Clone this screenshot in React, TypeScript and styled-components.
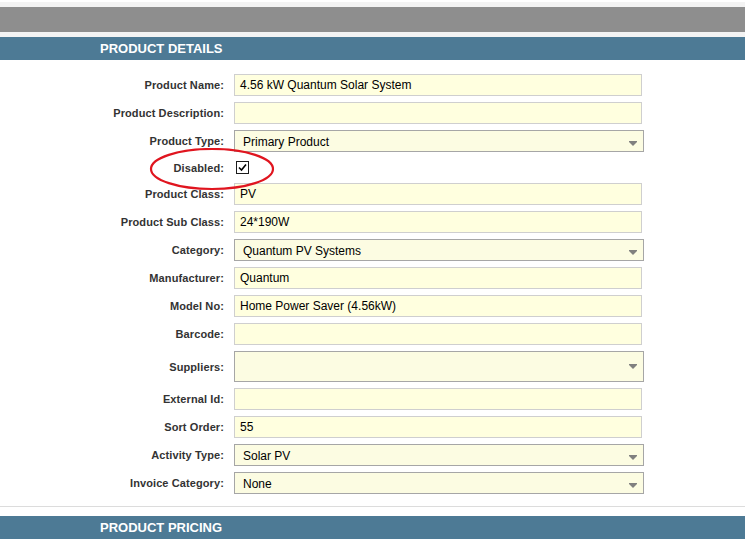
import { Fragment } from "react"
import styled, { createGlobalStyle } from "styled-components"

const GlobalStyle = createGlobalStyle`
    body {
        margin: 0;
        background: #ffffff;
        font-family: "Liberation Sans", Arial, sans-serif;
    }
`

const Page = styled.div`
    width: 745px;
    height: 544px;
    overflow: hidden;
    padding-top: 2px;
    box-sizing: border-box;
`

const TopBand = styled.div`
    background: #f3f3f3;
    padding: 5px 0;
`

const GrayBar = styled.div`
    height: 25px;
    background: #8e8e8e;
`

const SectionHeader = styled.div`
    height: 23px;
    background: #4d7a95;
    color: #ffffff;
    font-weight: bold;
    font-size: 13px;
    line-height: 23px;
    padding-left: 100px;
`

const Form = styled.div`
    position: relative;
    display: grid;
    grid-template-columns: 224px 410px;
    column-gap: 10px;
    row-gap: 6px;
    align-items: center;
    padding: 14px 0 12px;
    border-bottom: 1px solid #dcdcdc;
    margin-bottom: 9px;
`

const Label = styled.div`
    text-align: right;
    font-size: 11px;
    font-weight: bold;
    color: #333333;
    letter-spacing: 0.1px;
`

const TextInput = styled.div`
    width: 408px;
    height: 22px;
    box-sizing: border-box;
    border: 1px solid #cfcfcf;
    background: #ffffdf;
    font-size: 12px;
    line-height: 20px;
    padding-left: 5px;
    color: #000000;
`

const Select = styled.div<{ $tall?: boolean }>`
    position: relative;
    width: 410px;
    height: ${(p) => (p.$tall ? 31 : 22)}px;
    box-sizing: border-box;
    border: 1px solid #a6a6a6;
    background: #fcfce2;
    font-size: 12px;
    line-height: 22px;
    padding-left: 8px;
    color: #000000;
`

const Arrow = styled.svg<{ $top: number }>`
    position: absolute;
    right: 6px;
    top: ${(p) => p.$top}px;
`

const CheckRow = styled.div`
    height: 19px;
    display: flex;
    align-items: center;
    padding-left: 2px;
`

const Checkbox = styled.div`
    width: 13px;
    height: 13px;
    box-sizing: border-box;
    border: 1px solid #1c1c1c;
    background: #ffffff;
    display: flex;
    align-items: center;
    justify-content: center;
`

const Annotation = styled.svg`
    position: absolute;
    left: 149px;
    top: 88px;
`

type Field = {
    label: string
    kind: "text" | "select" | "check"
    value?: string
    tall?: boolean
}

const fields: Field[] = [
    { label: "Product Name:", kind: "text", value: "4.56 kW Quantum Solar System" },
    { label: "Product Description:", kind: "text" },
    { label: "Product Type:", kind: "select", value: "Primary Product" },
    { label: "Disabled:", kind: "check" },
    { label: "Product Class:", kind: "text", value: "PV" },
    { label: "Product Sub Class:", kind: "text", value: "24*190W" },
    { label: "Category:", kind: "select", value: "Quantum PV Systems" },
    { label: "Manufacturer:", kind: "text", value: "Quantum" },
    { label: "Model No:", kind: "text", value: "Home Power Saver (4.56kW)" },
    { label: "Barcode:", kind: "text" },
    { label: "Suppliers:", kind: "select", tall: true },
    { label: "External Id:", kind: "text" },
    { label: "Sort Order:", kind: "text", value: "55" },
    { label: "Activity Type:", kind: "select", value: "Solar PV" },
    { label: "Invoice Category:", kind: "select", value: "None" },
]

function renderField(f: Field) {
    if (f.kind === "check") {
        return (
            <CheckRow>
                <Checkbox>
                    <svg width="9" height="9" viewBox="0 0 9 9">
                        <path d="M1 4.5 L3.5 7 L8 1.5" stroke="#000" strokeWidth="1.6" fill="none" />
                    </svg>
                </Checkbox>
            </CheckRow>
        )
    }
    if (f.kind === "select") {
        return (
            <Select $tall={f.tall}>
                {f.value}
                <Arrow $top={f.tall ? 12 : 10} width="8" height="5" viewBox="0 0 8 5">
                    <path d="M0 0 H8 V1 L4 5 L0 1 Z" fill="#808080" />
                </Arrow>
            </Select>
        )
    }
    return <TextInput>{f.value}</TextInput>
}

export default function App() {
    return (
        <Page>
            <GlobalStyle />
            <TopBand>
                <GrayBar />
            </TopBand>
            <SectionHeader>PRODUCT DETAILS</SectionHeader>
            <Form>
                {fields.map((f) => (
                    <Fragment key={f.label}>
                        <Label>{f.label}</Label>
                        {renderField(f)}
                    </Fragment>
                ))}
                <Annotation width="128" height="44" viewBox="0 0 128 44">
                    <ellipse cx="63" cy="21" rx="61" ry="20" stroke="#e0151f" strokeWidth="2.2" fill="none" />
                </Annotation>
            </Form>
            <SectionHeader>PRODUCT PRICING</SectionHeader>
        </Page>
    )
}
